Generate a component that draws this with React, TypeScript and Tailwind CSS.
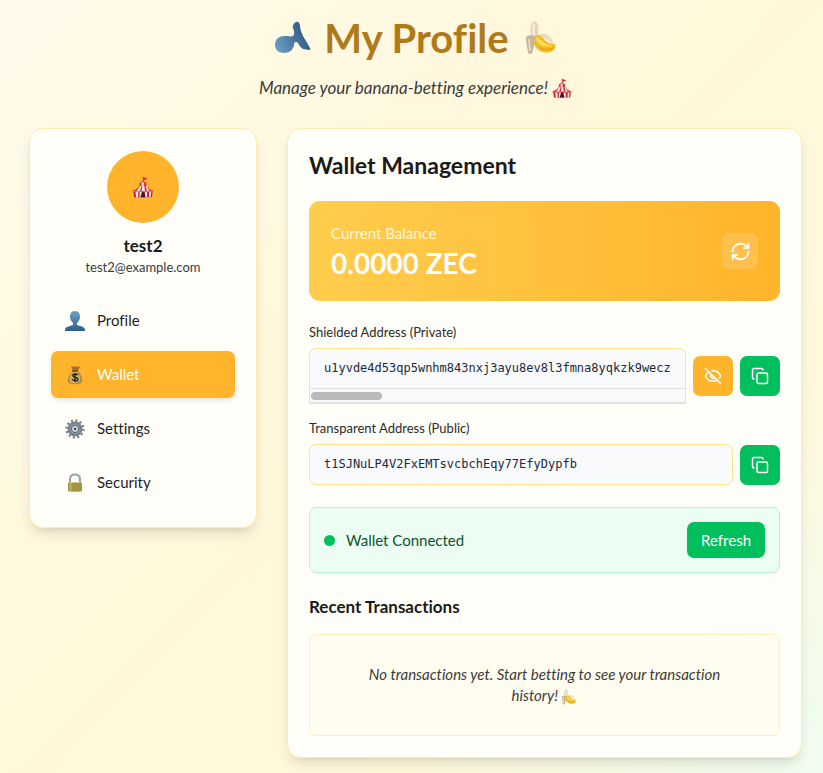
import type { ReactNode } from "react";
import { Copy, EyeOff, RefreshCw } from "lucide-react";

function Banana({ className }: { className: string }) {
  return (
    <svg viewBox="0 0 32 34" className={className} role="img" aria-label="banana">
      <path d="M6 17C5 11 5 3 8 1c2-2 5 0 5 4 1 4 0 8 0 13z" fill="#e6d6bd" />
      <path d="M9 3c-1 4-1 8 0 12" stroke="#f7eedb" strokeWidth="2" fill="none" />
      <path d="M13 14c5-3 13-1 15 7l-1 3c-2-5-7-8-13-7z" fill="#e9dac2" />
      <path d="M9 16c3-3 7-2 9 1 3 4 7 6 12 6 1 3 0 5-1 6-7 5-16 2-19-4-2-3-2-6-1-9z" fill="#f2bd22" />
      <path d="M11 16c4 0 5 7 17 9-8 2-16-1-17-9z" fill="#ffdf55" />
      <path d="M14 26c4 3 9 3 14 1" stroke="#d99a17" strokeWidth="1" fill="none" />
      <path d="M1 16c3-2 6-2 9-1 0 5-1 12-3 17-1 2-4 1-4-1-1-5-2-10-2-15z" fill="#c9b59a" />
      <path d="M4 18c0 4 1 8 1 12" stroke="#e6d8c3" strokeWidth="2" fill="none" />
    </svg>
  );
}

function Tent({ className }: { className: string }) {
  return (
    <svg viewBox="0 0 32 32" className={className} role="img" aria-label="circus tent">
      <path d="M16 11V1" stroke="#8b6b52" strokeWidth="1" />
      <path d="M16 1l7 3-7 3z" fill="#e8372c" />
      <path d="M11 10l5-3 5 3v5H11z" fill="#d92f35" />
      <path d="M14 9h3v6h-3z" fill="#f7f0ee" />
      <path d="M11 14h10c2 4 6 6 10 7v2H1v-2c4-1 8-3 10-7z" fill="#d3202f" />
      <path d="M12 14h2l-3 9H6zM15 14h3l1 9h-5zM20 14h1l5 9h-4z" fill="#f4eeee" />
      <path d="M2 22h28l-1 9H3z" fill="#c91c2b" />
      <path d="M5 23h4v8H6zM11 23h3v8h-3zM19 23h3v8h-3zM25 23h3l-1 8h-2z" fill="#ece6e8" />
      <path d="M16 21l4 10h-8z" fill="#3c1c1f" />
      <path d="M1 22h30" stroke="#eba6a2" strokeWidth="1" />
    </svg>
  );
}

function Person() {
  return (
    <svg viewBox="0 0 20 20" className="size-5" aria-hidden="true">
      <defs>
        <linearGradient id="person" x1="0" y1="0" x2="0" y2="1">
          <stop offset="0" stopColor="#6ba0c4" />
          <stop offset="1" stopColor="#2f5f86" />
        </linearGradient>
      </defs>
      <path d="M10 0c4 0 5 3 5 6 0 2-1 4-3 6v2c2 1 8 1 8 5v1H0v-1c0-4 6-4 8-5v-2C6 10 5 8 5 6c0-3 1-6 5-6z" fill="url(#person)" />
    </svg>
  );
}

function MoneyBag() {
  return (
    <svg viewBox="0 0 20 20" className="size-5" aria-hidden="true">
      <path d="M6 1l3 1 1-1 2 1 3-1-2 5H8z" fill="#a9692a" />
      <path d="M8 6h5c3 3 5 7 4 11-1 3-13 3-14 0-1-4 2-8 5-11z" fill="#ad8c43" />
      <path d="M8 7c-3 4-4 7-3 10 3 2 8 1 10-1 1-3-1-7-3-9z" fill="#d3b669" />
      <path d="M7 6h6" stroke="#7b4c1c" strokeWidth="1.500" />
      <path d="M13 10c-2-2-6-1-5 1 0 2 5 1 5 3 0 3-5 2-6 0M10 8v9" stroke="#2c2618" strokeWidth="1.500" fill="none" />
    </svg>
  );
}

function Gear() {
  return (
    <svg viewBox="0 0 20 20" className="size-5" aria-hidden="true">
      <circle cx="10" cy="10" r="8.500" fill="none" stroke="#7d8994" strokeWidth="2.400" strokeDasharray="2.200 2.250" />
      <circle cx="10" cy="10" r="6" fill="#a8b2bc" stroke="#77838e" strokeWidth="3" />
      <circle cx="10" cy="10" r="3.600" fill="#cfd7e0" stroke="#56616e" strokeWidth="1" />
      <circle cx="10" cy="10" r="1.200" fill="#3e4857" />
    </svg>
  );
}

function Padlock() {
  return (
    <svg viewBox="0 0 20 20" className="size-5" aria-hidden="true">
      <path d="M5 10V6c0-6 10-6 10 0v4" fill="none" stroke="#93a2ab" strokeWidth="2" />
      <path d="M3 9h14v9c0 1-14 1-14 0z" fill="#a49a49" />
      <path d="M3 9h14v1H3z" fill="#d0c886" />
      <path d="M3 12h14M3 14h14M3 16h14" stroke="#8d843c" strokeWidth=".5" />
      <path d="M4 10h3v8H4z" fill="#c2b967" opacity=".6" />
    </svg>
  );
}

function ProfileMark() {
  return (
    <svg viewBox="0 0 38 34" className="h-[34px] w-[38px]" aria-hidden="true">
      <defs>
        <linearGradient id="mark" x1="0" y1="0.700" x2="1" y2="0.300">
          <stop offset="0" stopColor="#6a9bc3" />
          <stop offset="1" stopColor="#285379" />
        </linearGradient>
      </defs>
      <path d="M22 1c2-1 4 1 4 4 0 4 2 7 3 10l7 12c1 1 0 2-1 2l-6-1c-2-1-4-4-5-6-2-2-4-1-4 1 0 5-4 9-10 9-5 0-9-3-9-8 0-6 4-9 10-9 4 0 6 1 8 0 2-2 1-5 0-8-1-2 1-5 3-6z" fill="url(#mark)" />
    </svg>
  );
}

const navItems: { label: string; icon: ReactNode; active?: boolean }[] = [
  { label: "Profile", icon: <Person /> },
  { label: "Wallet", icon: <MoneyBag />, active: true },
  { label: "Settings", icon: <Gear /> },
  { label: "Security", icon: <Padlock /> },
];

const card = "rounded-[14px] border border-[#ffebaf] bg-[#fffffb]/90 p-[21px] shadow-[0_8px_14px_-3px_rgba(0,0,0,0.12),0_3px_6px_-4px_rgba(0,0,0,0.12)]";
const iconButton = "flex size-10 shrink-0 items-center justify-center rounded-[7px] text-white";
const addressBox = "min-w-0 flex-1 overflow-hidden border border-[#ffe28a] bg-[#f8fafc] font-['DejaVu_Sans_Mono',monospace] text-[12px] leading-[17px] text-[#1e2939]";

export default function App() {
  return (
    <div className="min-h-screen bg-[linear-gradient(135deg,#fffbeb_0%,#fff7d9_50%,#fff8dc_75%,#f0fdf0_100%)] pt-[14px] pr-[21px] pb-[14px] pl-[29px] font-[Lato,sans-serif] text-[#1a1a1a] [font-variant-ligatures:none]">
      <header className="mb-7 text-center">
        <h1 className="flex h-12 items-center justify-center gap-3 text-[40px] leading-12 font-bold text-[#b07a1b]">
          <ProfileMark />
          <span>My Profile</span>
          <Banana className="ml-1 h-[34px] w-8" />
        </h1>
        <p className="mt-[14px] flex h-6 items-center justify-center gap-1 text-[17px] italic text-[#3b3b3b]">
          Manage your banana-betting experience!
          <Tent className="size-5" />
        </p>
      </header>

      <div className="flex items-start gap-[30px]">
        <aside className={`${card} w-[228px] shrink-0`}>
          <div className="flex flex-col items-center">
            <div className="mt-px flex size-18 items-center justify-center rounded-full bg-[#ffb42b]">
              <Tent className="size-[22px]" />
            </div>
            <h3 className="mt-[11px] text-[17px] leading-6 font-bold">test2</h3>
            <p className="text-[13px] leading-[18px] text-[#3b3b3b]">test2@example.com</p>
          </div>
          <nav className="mt-[21px] flex flex-col gap-[7px]">
            {navItems.map((item) => (
              <button
                key={item.label}
                type="button"
                className={`flex h-[47px] items-center gap-3 rounded-[7px] px-[14px] text-[15px] ${
                  item.active ? "bg-[#ffb42b] text-white shadow-[0_3px_5px_-1px_rgba(0,0,0,0.12)]" : "text-[#1f1f1f]"
                }`}
              >
                {item.icon}
                {item.label}
              </button>
            ))}
          </nav>
        </aside>

        <main className={`${card} min-w-0 flex-1`}>
          <h2 className="text-[23px] leading-[30px] font-bold">Wallet Management</h2>

          <section className="mt-[21px] flex h-[100px] items-center justify-between rounded-[11px] bg-linear-to-r from-[#ffcd4c] to-[#ffb42b] px-[22px] text-white">
            <div>
              <p className="text-[15px] leading-5 text-[#fff6d6]">Current Balance</p>
              <p className="mt-1 text-[28px] leading-8 font-bold">0.0000 ZEC</p>
            </div>
            <button type="button" aria-label="Refresh balance" className="flex size-9 items-center justify-center rounded-[7px] bg-white/15">
              <RefreshCw size={21} strokeWidth={2} />
            </button>
          </section>

          <section className="mt-[22px]">
            <h3 className="text-[13px] leading-[18px] text-[#2b2b2b]">Shielded Address (Private)</h3>
            <div className="mt-[7px] flex items-center gap-[7px]">
              <div className={`${addressBox} rounded-t-[7px]`}>
                <code className="block py-[11px] pl-[14px] font-[inherit] whitespace-nowrap">
                  u1yvde4d53qp5wnhm843nxj3ayu8ev8l3fmna8yqkzk9wecz
                </code>
                <div className="flex h-[15px] items-center border-y border-[#dfdfdf] bg-[#fafafa] px-px">
                  <div className="h-2 w-[71px] rounded-full bg-[#b9b9b9]" />
                </div>
              </div>
              <button type="button" aria-label="Hide address" className={`${iconButton} bg-[#ffb42b]`}>
                <EyeOff size={18} strokeWidth={2} />
              </button>
              <button type="button" aria-label="Copy shielded address" className={`${iconButton} bg-[#00bf5c]`}>
                <Copy size={18} strokeWidth={2} />
              </button>
            </div>

            <h3 className="mt-[15px] text-[13px] leading-[18px] text-[#2b2b2b]">Transparent Address (Public)</h3>
            <div className="mt-[7px] flex items-center gap-[7px]">
              <code className={`${addressBox} rounded-[7px] px-[14px] py-[11px]`}>t1SJNuLP4V2FxEMTsvcbchEqy77EfyDypfb</code>
              <button type="button" aria-label="Copy transparent address" className={`${iconButton} bg-[#00bf5c]`}>
                <Copy size={18} strokeWidth={2} />
              </button>
            </div>
          </section>

          <section className="mt-[22px] flex h-[66px] items-center justify-between rounded-[7px] border border-[#b4f5d2] bg-[#ecfdf3] px-[14px]">
            <p className="flex items-center gap-[11px] text-[15px] text-[#0d542b]">
              <span className="size-[11px] rounded-full bg-[#00bf5c]" />
              Wallet Connected
            </p>
            <button type="button" className="h-9 rounded-[7px] bg-[#00bf5c] px-[14px] text-[15px] text-white">
              Refresh
            </button>
          </section>

          <section className="mt-[22px]">
            <h3 className="text-[17px] leading-6 font-bold">Recent Transactions</h3>
            <div className="mt-[15px] flex h-[102px] items-center justify-center rounded-[7px] border border-[#ffefbd] bg-[#fffcf0] px-[43px] text-center">
              <p className="text-[15px] leading-[21px] text-[#3b3b3b] italic">
                No transactions yet. Start betting to see your transaction history!{" "}
                <Banana className="inline-block size-4" />
              </p>
            </div>
          </section>
        </main>
      </div>
    </div>
  );
}
